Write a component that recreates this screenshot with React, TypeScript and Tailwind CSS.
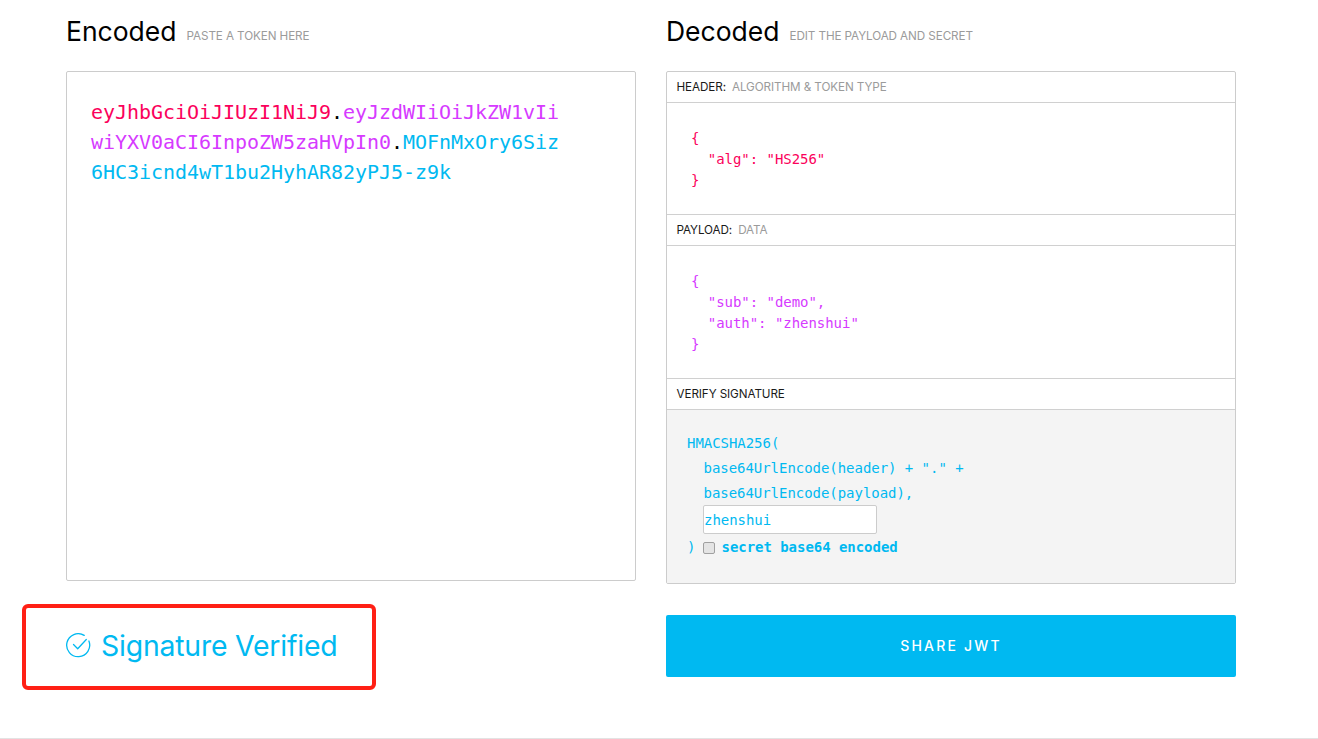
const sans = "font-['Inter','Noto_Sans',sans-serif]";

function SectionLabel({ title, sub }: { title: string; sub?: string }) {
  return (
    <div className="h-[31px] flex items-center gap-[6px] px-[9.5px] pt-[2px] text-[11.7px] tracking-[-0.1px] border-b border-[#d0d0d0]">
      <span className="text-[#1a1a1a]">{title}</span>
      {sub && <span className="text-[#9b9b9b]">{sub}</span>}
    </div>
  );
}

export default function App() {
  return (
    <div className={`w-[1318px] h-[739px] bg-white overflow-hidden relative ${sans}`}>
      <div className="h-[738px] px-[66px] grid grid-cols-[570px_570px] gap-x-[30px] grid-rows-[71px_513px_1fr]">
        <div className="flex items-baseline gap-[10px] pt-[13px]">
          <span className="text-[26.5px] leading-[36px] text-black">Encoded</span>
          <span className="text-[11.7px] text-[#9b9b9b] tracking-[-0.1px] -translate-y-px">PASTE A TOKEN HERE</span>
        </div>
        <div className="flex items-baseline gap-[10px] pt-[13px]">
          <span className="text-[26.5px] leading-[36px] text-black">Decoded</span>
          <span className="text-[11.7px] text-[#9b9b9b] tracking-[-0.1px] -translate-y-px">EDIT THE PAYLOAD AND SECRET</span>
        </div>

        <div className="h-[510px] border border-[#cccccc] rounded-[2px] px-[24px] py-[25px] font-['DejaVu_Sans_Mono',monospace] text-[20px] leading-[30px] tracking-[-0.04px] break-all">
          <span className="text-[#fb015b]">eyJhbGciOiJIUzI1NiJ9</span>
          <span className="text-black">.</span>
          <span className="text-[#d63aff]">eyJzdWIiOiJkZW1vIi<br />wiYXV0aCI6InpoZW5zaHVpIn0</span>
          <span className="text-black">.</span>
          <span className="text-[#00b9f1]">MOFnMxOry6Siz<br />6HC3icnd4wT1bu2HyhAR82yPJ5-z9k</span>
        </div>

        <div className="h-[513px] border border-[#cccccc] rounded-[2px] flex flex-col overflow-hidden">
          <SectionLabel title="HEADER:" sub="ALGORITHM & TOKEN TYPE" />
          <pre className="h-[112px] border-b border-[#d0d0d0] pl-[24px] pt-[25px] font-['DejaVu_Sans_Mono',monospace] text-[14px] leading-[21px] tracking-[-0.04px] text-[#fb015b]">{`{
  "alg": "HS256"
}`}</pre>
          <SectionLabel title="PAYLOAD:" sub="DATA" />
          <pre className="h-[133px] border-b border-[#d0d0d0] pl-[24px] pt-[25px] font-['DejaVu_Sans_Mono',monospace] text-[14px] leading-[21px] tracking-[-0.04px] text-[#d63aff]">{`{
  "sub": "demo",
  "auth": "zhenshui"
}`}</pre>
          <SectionLabel title="VERIFY SIGNATURE" />
          <div className="flex-1 bg-[#f4f4f4] pl-[20px] pt-[21px] font-['DejaVu_Sans_Mono',monospace] text-[14px] leading-[25px] tracking-[-0.04px] text-[#00b9f1]">
            <div>HMACSHA256(</div>
            <div className="pl-[16.5px]">base64UrlEncode(header) + "." +</div>
            <div className="pl-[16.5px]">base64UrlEncode(payload),</div>
            <div className="pl-[16px] h-[29px]">
              <div className="-mt-px w-[174px] h-[29px] bg-white border border-[#cccccc] rounded-[2px] leading-[28px]">zhenshui</div>
            </div>
            <div className="flex items-center h-[27px]">
              <span className="w-[16px]">)</span>
              <span className="w-[12px] h-[12px] bg-[#e4e4e4] border border-[#a0a0a0] rounded-[2px] mr-[6.5px]" />
              <span className="font-bold">secret base64 encoded</span>
            </div>
          </div>
        </div>

        <div className="flex items-center h-[124px]">
          <div className="flex items-center text-[#00b9f1] text-[28.4px] gap-[10px]">
            <svg width="25" height="25" viewBox="0 0 25 25" fill="none" stroke="#00b9f1" strokeWidth="1.3">
              <path d="M22.9 8A11.5 11.5 0 1 1 18.2 2.4" strokeLinecap="round" />
              <path d="M7.5 11.5l4.2 4.2 8.6-9.2" strokeLinecap="round" strokeLinejoin="round" />
            </svg>
            <span className="tracking-[-0.2px]">Signature Verified</span>
          </div>
        </div>
        <div className="pt-[31px]">
          <button className="w-[570px] h-[62px] pb-[1px] bg-[#00b9f1] rounded-[2px] text-white text-[14px] font-medium tracking-[2.2px]">SHARE JWT</button>
        </div>
      </div>
      <div className="h-px bg-[#e3e3e3]" />
      <div className="absolute left-[22px] top-[604px] w-[354px] h-[86px] border-[4px] border-[#ff2015] rounded-[6px]" />
    </div>
  );
}
